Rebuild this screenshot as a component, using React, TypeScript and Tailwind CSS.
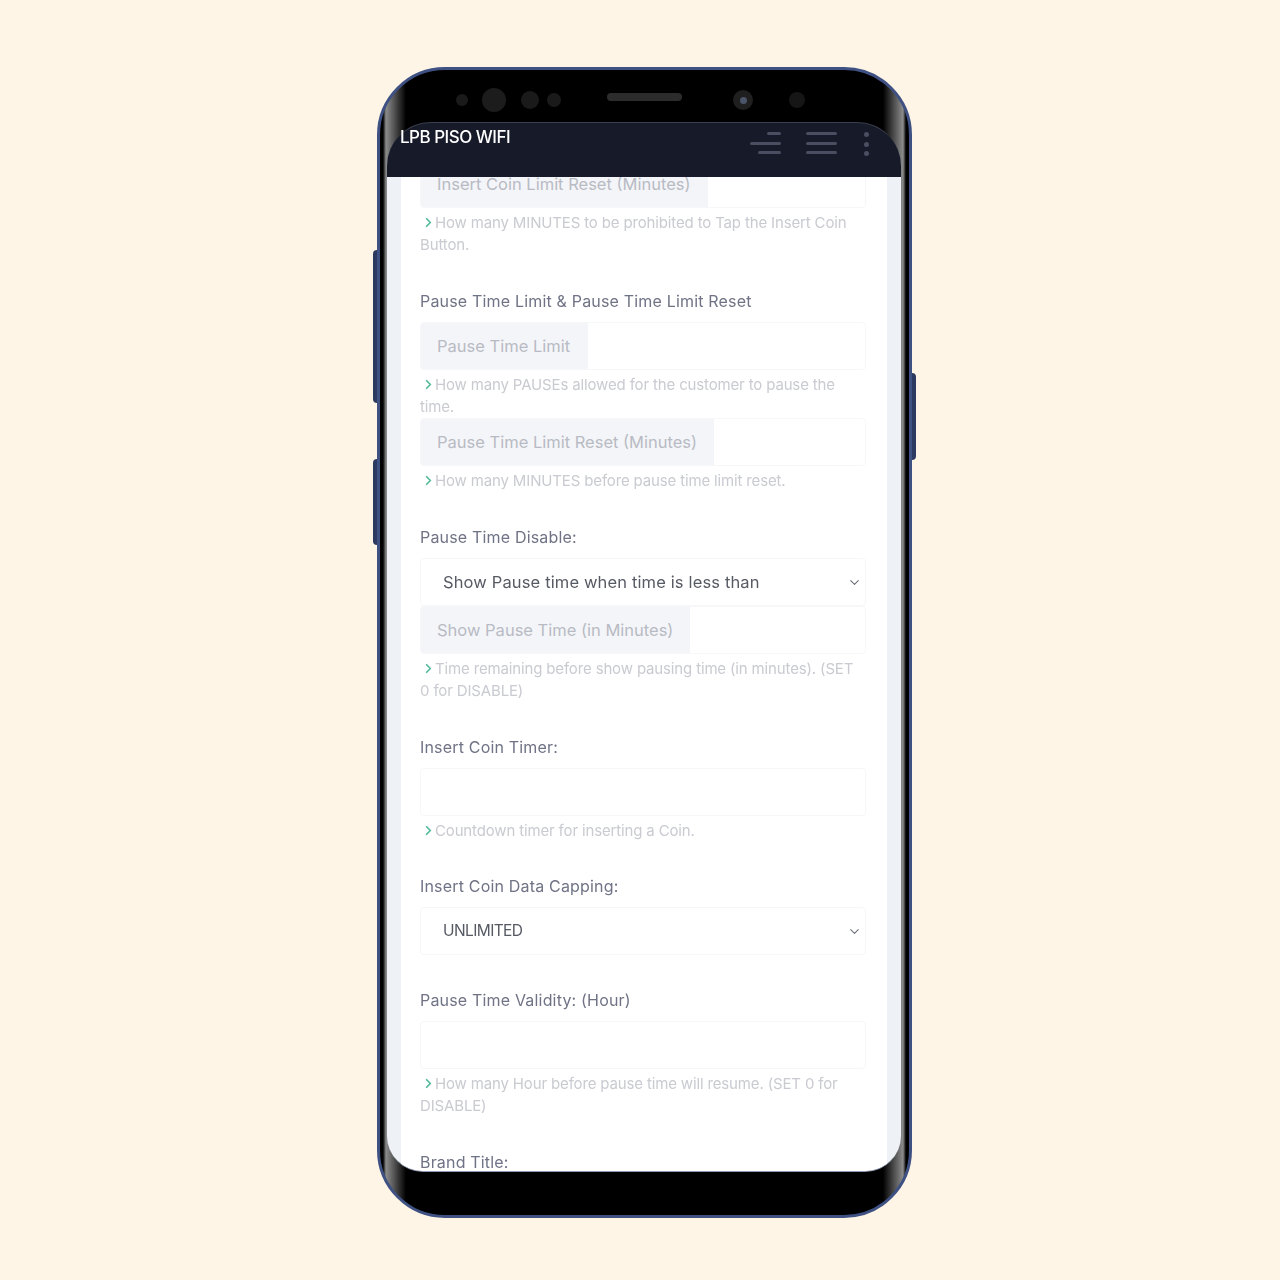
import React from 'react';
import { ChevronDown, ChevronRight } from 'lucide-react';

const labelClass = 'text-[16px] leading-[22px] font-normal tracking-[0.18px] text-[#6f7385]';
const boxClass = 'flex h-12 overflow-hidden rounded-[4px] border border-[#f6f7f9] bg-white';

function Help({ children, className = '' }: { children: React.ReactNode; className?: string }) {
  return (
    <p className={`text-[15px] leading-[22px] tracking-[-0.15px] text-[#c9cbd1] ${className}`}>
      <ChevronRight size={15} strokeWidth={2.75} className="ml-[1px] -mr-[1px] inline-block align-[-2px] text-[#52bb9c]" />
      {children}
    </p>
  );
}

function AddonInput({ label, width }: { label: string; width: string }) {
  return (
    <div className={`${boxClass} items-stretch`}>
      <span className={`flex items-center bg-[#f4f5f8] pl-4 text-[16.5px] text-[#b8bbc4] ${width}`}>{label}</span>
      <div className="flex-1" />
    </div>
  );
}

function SelectBox({ value, textClass }: { value: string; textClass: string }) {
  return (
    <div className={`${boxClass} items-center justify-between pr-[3px] pl-[22px] text-[#565a63]`}>
      <span className={textClass}>{value}</span>
      <ChevronDown size={15} strokeWidth={1.75} className="text-[#6b6f78]" />
    </div>
  );
}

function Lines({ widths }: { widths: string[] }) {
  return (
    <div className="flex flex-col items-end gap-[6.5px]">
      {widths.map((w, i) => (
        <span key={`${w}-${i}`} className={`h-[3px] rounded-full bg-[#4a4e60] ${w}`} />
      ))}
    </div>
  );
}

export default function App() {
  return (
    <div className="h-[1280px] bg-[#fff5e6] pt-[67px] pl-[377px] font-['Inter',sans-serif]">
      <div className="relative h-[1151px] w-[535px] rounded-[68px] border-[3px] border-[#3f5183] bg-[linear-gradient(90deg,#000_3px,#8c8c8c_6px,#000_26px,#000_503px,#8c8c8c_523px,#000_526px)] blur-[0.6px]">
        {/* side buttons */}
        <span className="absolute top-[180px] left-[-7px] h-[153px] w-[4px] rounded-l bg-[#2d3a5f]" />
        <span className="absolute top-[389px] left-[-7px] h-[86px] w-[4px] rounded-l bg-[#2d3a5f]" />
        <span className="absolute top-[303px] right-[-7px] h-[87px] w-[4px] rounded-r bg-[#2d3a5f]" />

        <div className="flex h-full flex-col pr-[8px] pb-[43px] pl-[7px]">
          {/* sensors row */}
          <div className="flex h-[52px] shrink-0 items-center pt-[8px] pl-[69px]">
            <span className="h-[12px] w-[12px] rounded-full bg-[#1a1a1a]" />
            <span className="ml-[14px] h-[24px] w-[24px] rounded-full bg-[#1c1c1c]" />
            <span className="ml-[15px] h-[18px] w-[18px] rounded-full bg-[#1a1a1a]" />
            <span className="ml-[8px] h-[14px] w-[14px] rounded-full bg-[#1a1a1a]" />
            <span className="ml-[46px] h-[8px] w-[75px] -translate-y-[3px] rounded-full bg-[#2c2c2c]" />
            <span className="ml-[51px] flex h-[20px] w-[20px] items-center justify-center rounded-full bg-[#1f1f1f]">
              <span className="h-[7px] w-[7px] rounded-full bg-[#4b5468]" />
            </span>
            <span className="ml-[36px] h-[16px] w-[16px] rounded-full bg-[#161616]" />
          </div>

          <div className="flex min-h-0 flex-1 flex-col overflow-hidden rounded-b-[36px] border-b border-[#8f9bb8]">
            <header className="z-10 flex h-[55px] shrink-0 items-start justify-between rounded-t-[44px] border-t border-[#3a3f4e] bg-[#171a29] pt-[6px] pr-[32px] pl-[13px]">
              <span className="text-[17px] leading-[17px] font-medium tracking-[-0.5px] text-white">LPB PISO WIFI</span>
              <div className="mt-[3px] flex items-start">
                <Lines widths={['w-[14px]', 'w-[31px]', 'w-[23px]']} />
                <div className="ml-[25px]">
                  <Lines widths={['w-[31px]', 'w-[31px]', 'w-[31px]']} />
                </div>
                <div className="ml-[27px] flex flex-col gap-[4.5px]">
                  <span className="h-[5px] w-[5px] rounded-full bg-[#4a4e60]" />
                  <span className="h-[5px] w-[5px] rounded-full bg-[#4a4e60]" />
                  <span className="h-[5px] w-[5px] rounded-full bg-[#4a4e60]" />
                </div>
              </div>
            </header>

            <div className="min-h-0 flex-1 bg-[#eef1f5] px-[14px]">
              <main className="h-full overflow-hidden bg-white px-[19px]">
                <div className="-mt-[17px] w-[446px]">
                  <AddonInput label="Insert Coin Limit Reset (Minutes)" width="w-[287px]" />
                  <Help className="mt-[4px]">How many MINUTES to be prohibited to Tap the Insert Coin Button.</Help>

                  <h3 className={`${labelClass} mt-[34px] mb-[10px]`}>Pause Time Limit &amp; Pause Time Limit Reset</h3>
                  <AddonInput label="Pause Time Limit" width="w-[167px]" />
                  <Help className="mt-[4px]">How many PAUSEs allowed for the customer to pause the time.</Help>
                  <AddonInput label="Pause Time Limit Reset (Minutes)" width="w-[293px]" />
                  <Help className="mt-[4px]">How many MINUTES before pause time limit reset.</Help>

                  <h3 className={`${labelClass} mt-[34px] mb-[10px]`}>Pause Time Disable:</h3>
                  <SelectBox value="Show Pause time when time is less than" textClass="text-[16.5px] tracking-[0.14px]" />
                  <AddonInput label="Show Pause Time (in Minutes)" width="w-[269px]" />
                  <Help className="mt-[4px]">Time remaining before show pausing time (in minutes). (SET 0 for DISABLE)</Help>

                  <h3 className={`${labelClass} mt-[34px] mb-[10px]`}>Insert Coin Timer:</h3>
                  <div className={boxClass} />
                  <Help className="mt-[4px]">Countdown timer for inserting a Coin.</Help>

                  <h3 className={`${labelClass} mt-[33px] mb-[10px]`}>Insert Coin Data Capping:</h3>
                  <SelectBox value="UNLIMITED" textClass="text-[15.5px] tracking-[-0.6px]" />

                  <h3 className={`${labelClass} mt-[34px] mb-[10px]`}>Pause Time Validity: (Hour)</h3>
                  <div className={boxClass} />
                  <Help className="mt-[4px]">How many Hour before pause time will resume. (SET 0 for DISABLE)</Help>

                  <h3 className={`${labelClass} mt-[34px]`}>Brand Title:</h3>
                </div>
              </main>
            </div>
          </div>
        </div>
      </div>
    </div>
  );
}
